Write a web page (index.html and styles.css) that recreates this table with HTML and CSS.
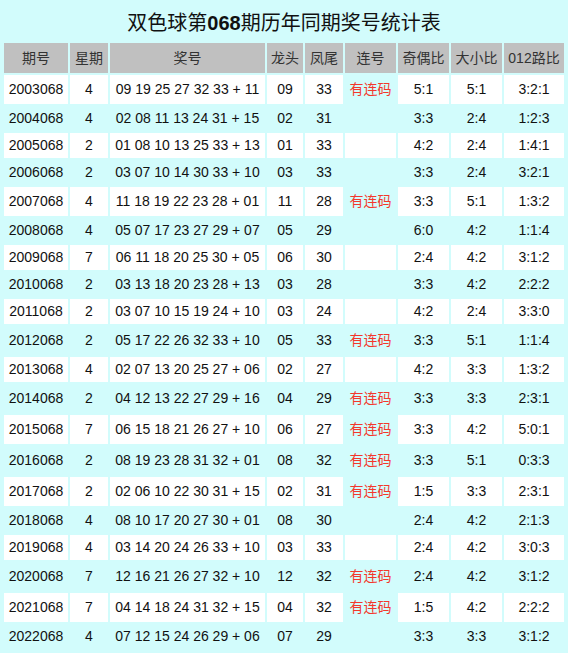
FILE: index.html
```html
<!DOCTYPE html>
<html lang="zh-CN">
<head>
<meta charset="utf-8">
<title>双色球第068期历年同期奖号统计表</title>
<link rel="stylesheet" href="styles.css">
</head>
<body>
<div class="title">双色球第<b>068</b>期历年同期奖号统计表</div>
<table class="stats">
<colgroup>
<col class="c-qh"><col class="c-xq"><col class="c-jh"><col class="c-lt"><col class="c-fw"><col class="c-lh"><col class="c-jo"><col class="c-dx"><col class="c-lu">
</colgroup>
<thead>
<tr><th>期号</th><th>星期</th><th>奖号</th><th>龙头</th><th>凤尾</th><th>连号</th><th>奇偶比</th><th>大小比</th><th>012路比</th></tr>
</thead>
<tbody>
<tr class="w lx"><td>2003068</td><td>4</td><td>09 19 25 27 32 33 + 11</td><td>09</td><td>33</td><td class="lianhao">有连码</td><td>5:1</td><td>5:1</td><td>3:2:1</td></tr>
<tr class="c"><td>2004068</td><td>4</td><td>02 08 11 13 24 31 + 15</td><td>02</td><td>31</td><td class="lianhao"></td><td>3:3</td><td>2:4</td><td>1:2:3</td></tr>
<tr class="w"><td>2005068</td><td>2</td><td>01 08 10 13 25 33 + 13</td><td>01</td><td>33</td><td></td><td>4:2</td><td>2:4</td><td>1:4:1</td></tr>
<tr class="c"><td>2006068</td><td>2</td><td>03 07 10 14 30 33 + 10</td><td>03</td><td>33</td><td></td><td>3:3</td><td>2:4</td><td>3:2:1</td></tr>
<tr class="w lx"><td>2007068</td><td>4</td><td>11 18 19 22 23 28 + 01</td><td>11</td><td>28</td><td class="lianhao">有连码</td><td>3:3</td><td>5:1</td><td>1:3:2</td></tr>
<tr class="c"><td>2008068</td><td>4</td><td>05 07 17 23 27 29 + 07</td><td>05</td><td>29</td><td></td><td>6:0</td><td>4:2</td><td>1:1:4</td></tr>
<tr class="w"><td>2009068</td><td>7</td><td>06 11 18 20 25 30 + 05</td><td>06</td><td>30</td><td></td><td>2:4</td><td>4:2</td><td>3:1:2</td></tr>
<tr class="c"><td>2010068</td><td>2</td><td>03 13 18 20 23 28 + 13</td><td>03</td><td>28</td><td></td><td>3:3</td><td>4:2</td><td>2:2:2</td></tr>
<tr class="w"><td>2011068</td><td>2</td><td>03 07 10 15 19 24 + 10</td><td>03</td><td>24</td><td></td><td>4:2</td><td>2:4</td><td>3:3:0</td></tr>
<tr class="c lx"><td>2012068</td><td>2</td><td>05 17 22 26 32 33 + 10</td><td>05</td><td>33</td><td class="lianhao">有连码</td><td>3:3</td><td>5:1</td><td>1:1:4</td></tr>
<tr class="w"><td>2013068</td><td>4</td><td>02 07 13 20 25 27 + 06</td><td>02</td><td>27</td><td></td><td>4:2</td><td>3:3</td><td>1:3:2</td></tr>
<tr class="c lx"><td>2014068</td><td>2</td><td>04 12 13 22 27 29 + 16</td><td>04</td><td>29</td><td class="lianhao">有连码</td><td>3:3</td><td>3:3</td><td>2:3:1</td></tr>
<tr class="w lx"><td>2015068</td><td>7</td><td>06 15 18 21 26 27 + 10</td><td>06</td><td>27</td><td class="lianhao">有连码</td><td>3:3</td><td>4:2</td><td>5:0:1</td></tr>
<tr class="c lx"><td>2016068</td><td>2</td><td>08 19 23 28 31 32 + 01</td><td>08</td><td>32</td><td class="lianhao">有连码</td><td>3:3</td><td>5:1</td><td>0:3:3</td></tr>
<tr class="w lx"><td>2017068</td><td>2</td><td>02 06 10 22 30 31 + 15</td><td>02</td><td>31</td><td class="lianhao">有连码</td><td>1:5</td><td>3:3</td><td>2:3:1</td></tr>
<tr class="c"><td>2018068</td><td>4</td><td>08 10 17 20 27 30 + 01</td><td>08</td><td>30</td><td></td><td>2:4</td><td>4:2</td><td>2:1:3</td></tr>
<tr class="w"><td>2019068</td><td>4</td><td>03 14 20 24 26 33 + 10</td><td>03</td><td>33</td><td></td><td>2:4</td><td>4:2</td><td>3:0:3</td></tr>
<tr class="c lx"><td>2020068</td><td>7</td><td>12 16 21 26 27 32 + 10</td><td>12</td><td>32</td><td class="lianhao">有连码</td><td>2:4</td><td>4:2</td><td>3:1:2</td></tr>
<tr class="w lx"><td>2021068</td><td>7</td><td>04 14 18 24 31 32 + 15</td><td>04</td><td>32</td><td class="lianhao">有连码</td><td>1:5</td><td>4:2</td><td>2:2:2</td></tr>
<tr class="c"><td>2022068</td><td>4</td><td>07 12 15 24 26 29 + 06</td><td>07</td><td>29</td><td></td><td>3:3</td><td>3:3</td><td>3:1:2</td></tr>
</tbody>
</table>
</body>
</html>
```

FILE: styles.css
```css
html, body {
  margin: 0;
  padding: 0;
  background: #d2fcfc;
}
body {
  font-family: "Liberation Sans", "Noto Sans CJK SC", Arial, sans-serif;
  color: #111;
  font-size: 14px;
}
.title {
  height: 41px;
  box-sizing: border-box;
  padding-top: 9px;
  line-height: 29px;
  text-align: center;
  font-size: 20px;
  color: #111;
  white-space: nowrap;
}
.title b {
  font-weight: bold;
}
.stats {
  table-layout: fixed;
  width: 564px;
  margin: 0 auto;
  border-collapse: separate;
  border-spacing: 2px;
}
.c-qh { width: 64px; }
.c-xq { width: 38px; }
.c-jh { width: 155px; }
.c-lt { width: 36px; }
.c-fw { width: 38px; }
.c-lh { width: 51px; }
.c-jo { width: 51px; }
.c-dx { width: 51px; }
.c-lu { width: 60px; }
.stats th {
  background: #c0c0c0;
  color: #333;
  font-weight: normal;
  font-size: 14px;
  padding: 0;
  height: 30px;
  line-height: 30px;
  text-align: center;
  white-space: nowrap;
}
.stats td {
  padding: 0;
  text-align: center;
  white-space: nowrap;
  height: 25px;
  line-height: 25px;
}
.stats tr.lx td {
  height: 29px;
  line-height: 29px;
}
.stats tr.w td {
  background: #ffffff;
}
.stats tr.c td {
  background: transparent;
}
.stats tr td.lianhao {
  background: transparent;
  color: #f3382c;
}
```
